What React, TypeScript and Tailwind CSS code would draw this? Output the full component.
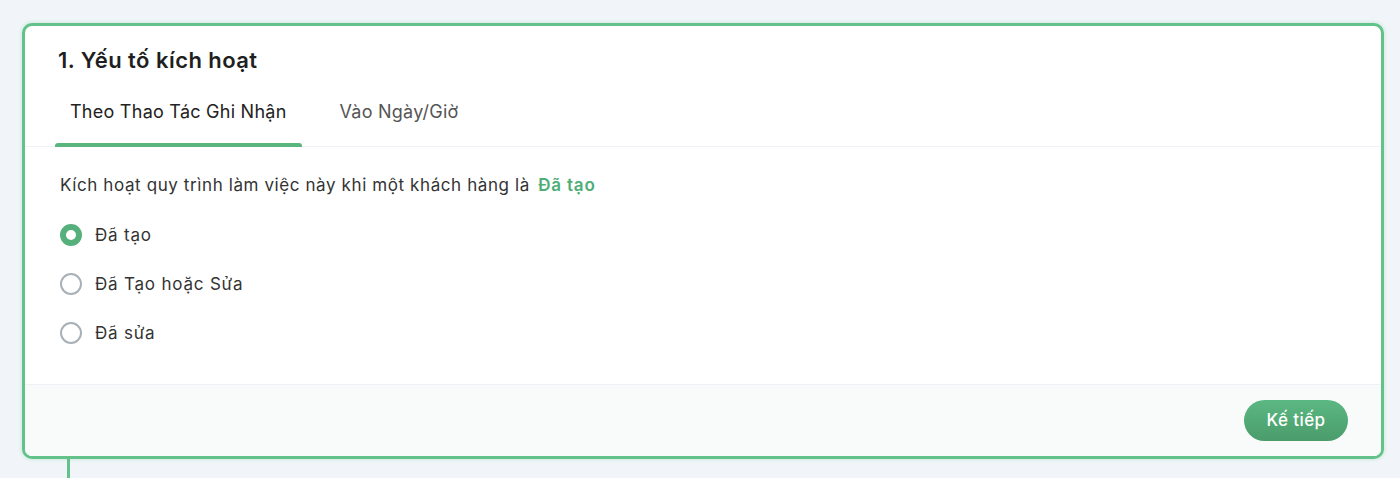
import { useState } from "react"

const OPTIONS = ["Đã tạo", "Đã Tạo hoặc Sửa", "Đã sửa"]

export default function App() {
  const [tab, setTab] = useState(0)
  const [choice, setChoice] = useState(0)

  return (
    <div className="h-[478px] w-[1400px] bg-[#f1f5f9] pt-[23px] pl-[22px] font-['Inter',sans-serif] text-[#222]">
      <div className="w-[1362px] overflow-hidden rounded-[10px] border-[3px] border-[#62c28a] bg-white shadow-[0_0_4px_rgba(98,194,138,0.35)]">
        <div className="px-[33px] pt-[20px]">
          <h2 className="text-[22px] font-semibold leading-[28px] tracking-[0.45px] text-[#1f1f1f]">1. Yếu tố kích hoạt</h2>
        </div>
        <div className="mt-[25px] flex gap-[23px] border-b border-[#eef1f5] px-[30px]">
          {["Theo Thao Tác Ghi Nhận", "Vào Ngày/Giờ"].map((t, i) => (
            <button
              key={t}
              onClick={() => setTab(i)}
              className={
                "relative px-[15px] pb-[21px] text-[18px] leading-[26px] tracking-[0.25px] " +
                (i === tab ? "text-[#222]" : "text-[#555]")
              }
            >
              {t}
              {i === tab && (
                <span className="absolute right-0 bottom-[-1px] left-0 h-[4px] rounded-t-[3px] bg-[#5bb57f]" />
              )}
            </button>
          ))}
        </div>

        <div className="px-[35px] pt-[26px] pb-[39px]">
          <p className="text-[17px] leading-[24px] tracking-[0.6px] text-[#333]">
            Kích hoạt quy trình làm việc này khi một khách hàng là{" "}
            <span className="ml-[3px] font-semibold tracking-[0.8px] text-[#4eae77]">{OPTIONS[choice]}</span>
          </p>
          <div className="mt-[26px] flex flex-col gap-[25px]">
            {OPTIONS.map((o, i) => (
              <label key={o} className="flex cursor-pointer items-center gap-[13px]" onClick={() => setChoice(i)}>
                {i === choice ? (
                  <span className="h-[22px] w-[22px] rounded-full border-[6px] border-[#56b07c] bg-white" />
                ) : (
                  <span className="h-[22px] w-[22px] rounded-full border-2 border-[#a8b0b8] bg-white" />
                )}
                <span className="text-[17px] leading-[24px] tracking-[0.8px] text-[#333]">{o}</span>
              </label>
            ))}
          </div>
        </div>

        <div className="flex h-[72px] items-center justify-end border-t border-[#eef1f5] bg-[#f9fbfb] px-[33px]">
          <button className="h-[41px] w-[104px] rounded-full bg-gradient-to-b from-[#5bb882] to-[#4a9c6b] text-[17px] font-medium tracking-[0.4px] text-white">
            Kế tiếp
          </button>
        </div>
      </div>
      <div className="ml-[45px] h-[20px] w-[3px] bg-[#62c28a]" />
    </div>
  )
}
